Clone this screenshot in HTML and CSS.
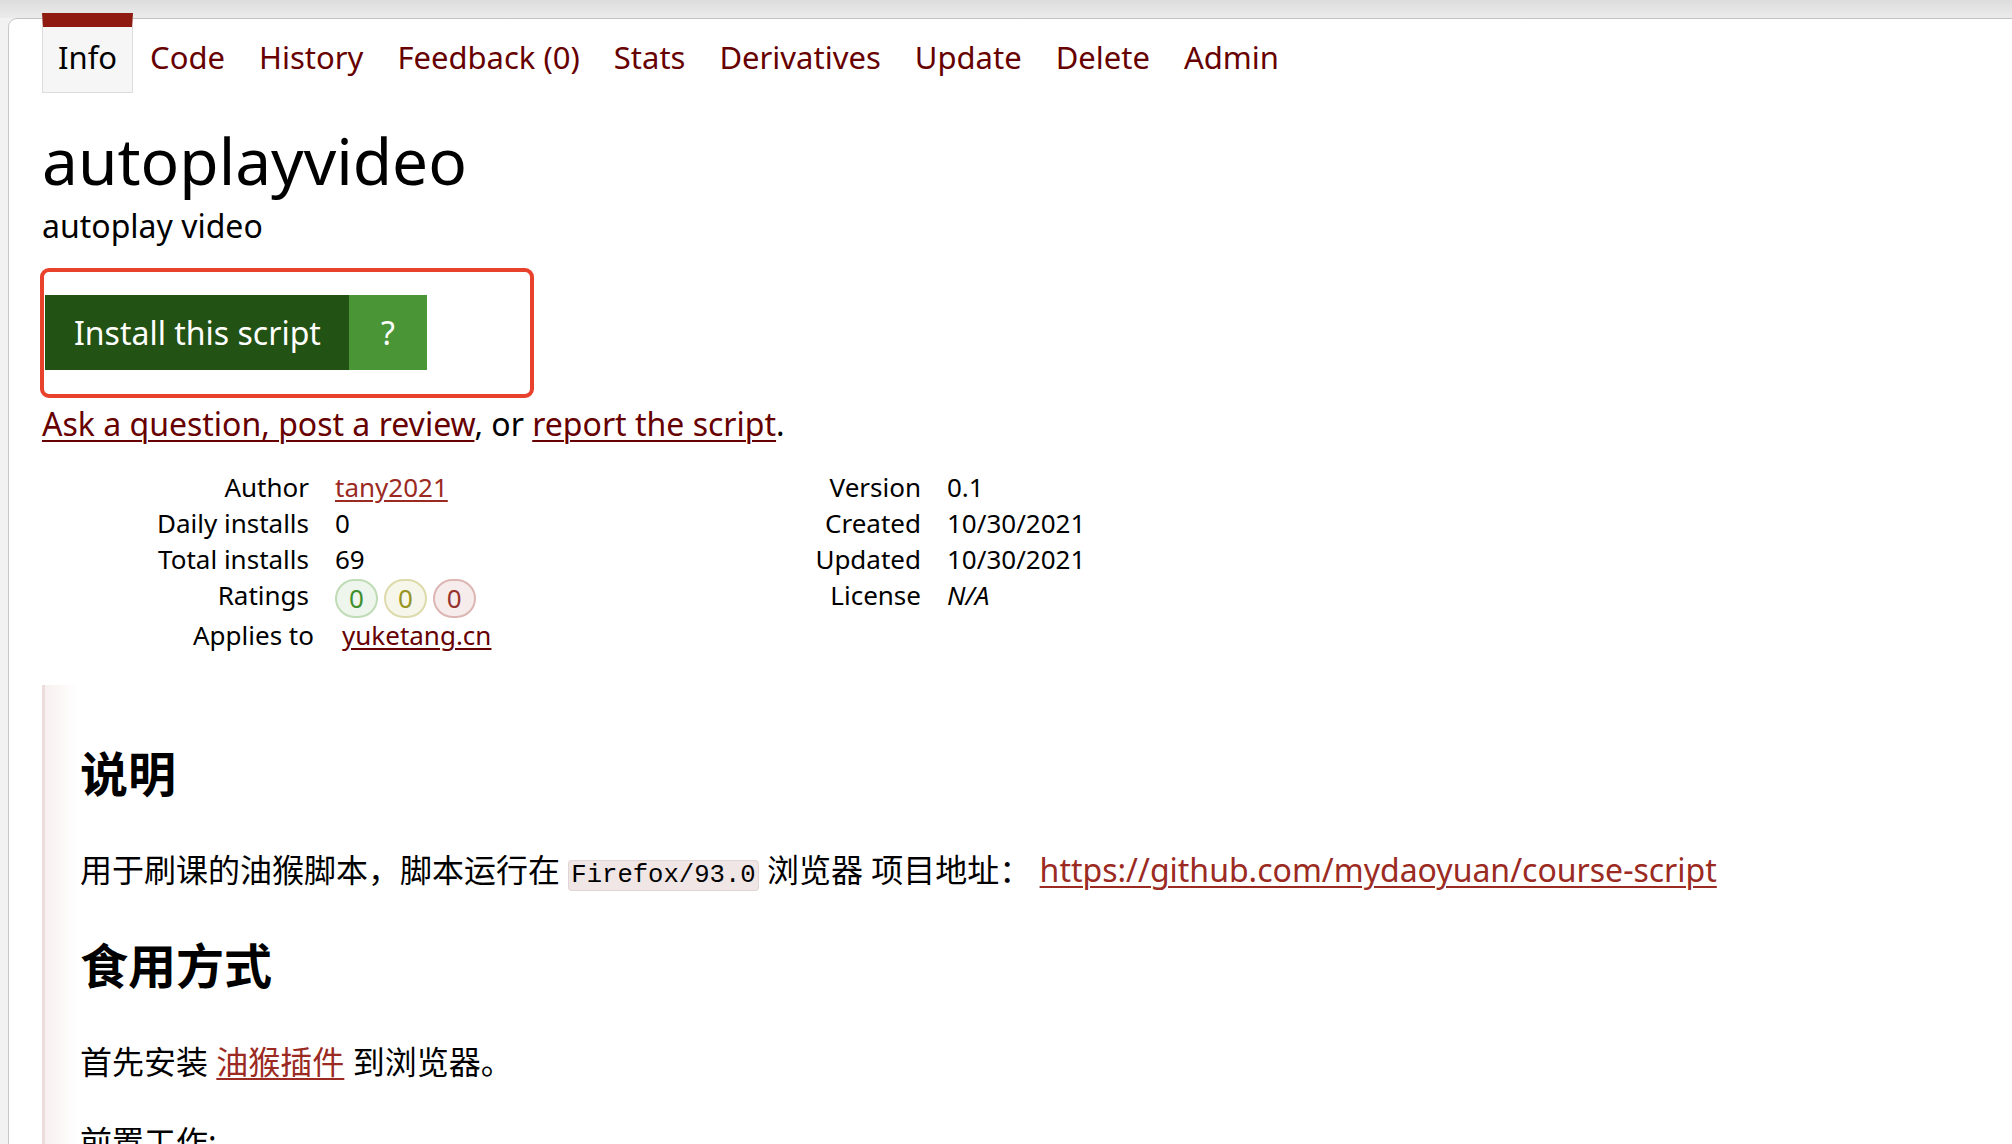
FILE: index.html
```html
<!DOCTYPE html>
<html lang="en">
<head>
<meta charset="utf-8">
<title>autoplayvideo</title>
<link rel="stylesheet" href="styles.css">
</head>
<body>
<div class="chrome"></div>
<div class="card">
  <ul class="tabs">
    <li class="tab current">Info</li>
    <li class="tab"><a href="#">Code</a></li>
    <li class="tab"><a href="#">History</a></li>
    <li class="tab"><a href="#">Feedback (0)</a></li>
    <li class="tab"><a href="#">Stats</a></li>
    <li class="tab"><a href="#">Derivatives</a></li>
    <li class="tab"><a href="#">Update</a></li>
    <li class="tab"><a href="#">Delete</a></li>
    <li class="tab"><a href="#">Admin</a></li>
  </ul>

  <main class="content">
    <h1 class="script-name">autoplayvideo</h1>
    <p class="script-desc">autoplay video</p>

    <div class="install-area">
      <div class="install-group">
        <a class="install-link" href="#">Install this script</a><a class="install-help" href="#">?</a>
      </div>
    </div>

    <p class="feedback-line"><a href="#">Ask a question, post a review</a>, or <a href="#">report the script</a>.</p>

    <div class="stats">
      <dl class="stats-col">
        <dt>Author</dt><dd><a class="user-link" href="#">tany2021</a></dd>
        <dt>Daily installs</dt><dd>0</dd>
        <dt>Total installs</dt><dd>69</dd>
        <dt>Ratings</dt>
        <dd class="ratings"><span class="rating good">0</span><span class="rating ok">0</span><span class="rating bad">0</span></dd>
      </dl>
      <dl class="stats-col">
        <dt>Version</dt><dd>0.1</dd>
        <dt>Created</dt><dd>10/30/2021</dd>
        <dt>Updated</dt><dd>10/30/2021</dd>
        <dt>License</dt><dd><em>N/A</em></dd>
      </dl>
    </div>

    <div class="applies">
      <span class="applies-label">Applies to</span>
      <span><a href="#">yuketang.cn</a></span>
    </div>

    <section class="additional-info">
      <h2>说明</h2>
      <p>用于刷课的油猴脚本，脚本运行在 <code>Firefox/93.0</code> 浏览器 项目地址： <a href="#">https://github.com/mydaoyuan/course-script</a></p>
      <h2>食用方式</h2>
      <p>首先安装 <a href="#">油猴插件</a> 到浏览器。</p>
      <p>前置工作:</p>
      <p>进入课程页面，打开视频列表。</p>
    </section>
  </main>
</div>
</body>
</html>
```

FILE: styles.css
```css
html, body {
  margin: 0;
  padding: 0;
}

body {
  background: #f2f2f2;
  color: #000;
  font-family: "Noto Sans", "Open Sans", "Noto Sans CJK SC", sans-serif;
  font-size: 32px;
  overflow: hidden;
}

a {
  color: #670000;
  text-decoration: underline;
  text-decoration-thickness: 2px;
  text-underline-offset: 4px;
}

.chrome {
  height: 18px;
  background: linear-gradient(#dddddd, #ebebeb);
}

.card {
  margin-left: 8px;
  min-height: 1200px;
  background: #fff;
  border-top: 1px solid #c1c1c1;
  border-left: 1px solid #c8c8c8;
  border-top-left-radius: 9px;
}

/* nav tabs */
.tabs {
  display: flex;
  list-style: none;
  margin: -6px 0 0;
  padding: 0 0 0 33px;
}

.tab {
  border-top: 14px solid transparent;
  border-left: 1px solid transparent;
  border-right: 1px solid transparent;
  border-bottom: 1px solid transparent;
  padding: 8px 16px 13px;
  line-height: 44px;
  font-size: 31px;
}

.tab a {
  color: #670000;
  text-decoration: none;
}

.tab.current {
  border-top-color: #8e1a11;
  border-left-color: #dcdcdc;
  border-right-color: #dcdcdc;
  border-bottom-color: #dcdcdc;
  background: #f6f6f6;
  color: #000;
  padding-left: 15px;
  padding-right: 15px;
}

/* main */
.content {
  padding: 0 40px 0 33px;
}

.script-name {
  margin: 32px 0 0;
  font-size: 64px;
  font-weight: 400;
  line-height: 72px;
}

.script-desc {
  margin: 9px 0 0;
  line-height: 40px;
}

.install-area {
  margin: 22px 0 0 -2px;
  width: 494px;
  box-sizing: border-box;
  border: 4px solid #e8412c;
  border-radius: 9px;
  padding: 23px 0 24px 1px;
}

.install-group {
  display: flex;
  height: 75px;
}

.install-link,
.install-help {
  display: block;
  color: #fff;
  text-decoration: none;
  line-height: 75px;
}

.install-link {
  background: #235215;
  padding: 0 28px 0 29px;
}

.install-help {
  background: #4a9637;
  width: 78px;
  text-align: center;
}

.feedback-line {
  margin: 6px 0 0;
  line-height: 40px;
}

/* stats */
.stats {
  display: flex;
  align-items: flex-start;
  margin-top: 25px;
}

.stats-col {
  display: grid;
  grid-template-columns: 267px auto;
  grid-auto-rows: 36px;
  column-gap: 26px;
  width: 612px;
  margin: 0;
  font-size: 26px;
  line-height: 36px;
}

.stats-col dt {
  text-align: right;
}

.stats-col dd {
  margin: 0;
}

.stats-col em {
  font-style: italic;
}

.stats a {
  text-decoration-thickness: 2px;
  text-underline-offset: 3px;
}

.user-link {
  color: #9b2a22;
}

.ratings {
  display: flex;
  gap: 6px;
  align-items: center;
  height: 36px;
}

.rating {
  display: inline-block;
  height: 35px;
  line-height: 35px;
  padding: 0 12px;
  border: 2px solid;
  border-radius: 21px;
  margin: 0 0 -6px;
  flex: none;
}

.rating.good {
  background: #eef5ec;
  border-color: #bfdcb6;
  color: #3f8f2f;
}

.rating.ok {
  background: #f6f6ea;
  border-color: #dddbab;
  color: #979423;
}

.rating.bad {
  background: #f6ecec;
  border-color: #ddb6b4;
  color: #97332e;
}

.applies {
  display: grid;
  grid-template-columns: 272px auto;
  column-gap: 28px;
  margin-top: 4px;
  font-size: 26px;
  line-height: 36px;
}

.applies-label {
  text-align: right;
}

.applies a {
  text-underline-offset: 3px;
}

/* description */
.additional-info {
  margin-top: 32px;
  padding: 17px 0 0 38px;
  background:
    linear-gradient(to right, #eddcdc 0, #eddcdc 3px, #f8f0f0 3px, #ffffff 36px) no-repeat;
  background-size: 36px 100%;
}

.additional-info h2 {
  margin: 40px 0;
  font-size: 48px;
  line-height: 64px;
  font-weight: 700;
}

.additional-info p {
  margin: 32px 0;
  line-height: 48px;
  height: 48px;
}

.additional-info a {
  color: #9b2a22;
}

.additional-info code {
  font-family: "Liberation Mono", "DejaVu Sans Mono", monospace;
  font-size: 25.6px;
  line-height: 1;
  background: #efe6e5;
  border: 1px solid #e0d6d5;
  border-radius: 4px;
  padding: 0 2px;
}
```
